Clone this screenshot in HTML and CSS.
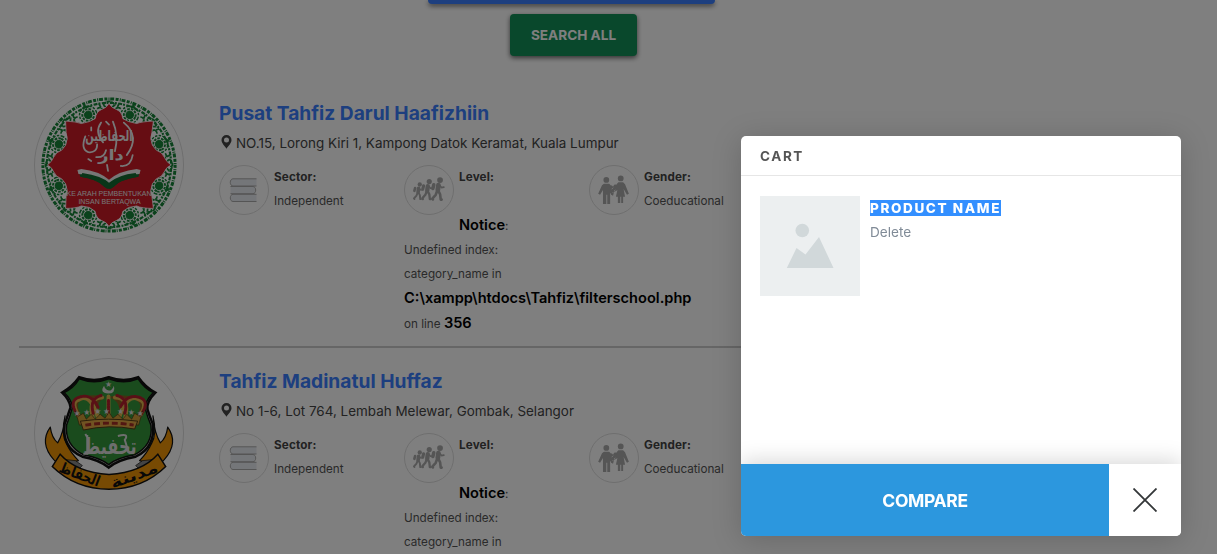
FILE: index.html
```html
<!DOCTYPE html>
<html lang="en">
<head>
<meta charset="utf-8">
<title>Tahfiz schools</title>
<link rel="stylesheet" href="styles.css">
</head>
<body>
<svg class="defs" width="0" height="0" aria-hidden="true">
  <defs>
    <symbol id="pin" viewBox="0 0 11 14"><path fill="#444" fill-rule="evenodd" d="M5.5 0A5 5 0 0 0 .5 5C.5 8.300 3.500 10.500 5.500 13.800 7.500 10.500 10.500 8.300 10.500 5A5 5 0 0 0 5.500 0ZM5.500 2.400a2.500 2.500 0 1 1 0 5 2.500 2.500 0 0 1 0-5Z"/></symbol>
    <symbol id="books" viewBox="0 0 48 48">
      <g fill="#e9ecf3" stroke="#aaa" stroke-width="1"><path d="M36.500 12.800H13c-3.600 0-3.600 7.200 0 7.200H36.500" /><path d="M10.500 20.500h22.500c3.600 0 3.600 7.200 0 7.200H10.500"/><path d="M36.500 28.300H13c-3.600 0-3.600 7.200 0 7.200H36.500"/></g>
    </symbol>
    <g id="walker" fill="none" stroke="#aaa" stroke-linecap="round" stroke-linejoin="round">
      <circle cx="2.500" cy="-10.300" r="3" fill="#aaa" stroke="none"/>
      <path d="M.8-5 .2 0" stroke-width="5"/>
      <path d="M.8 1 2.600 4.500 3.200 10h1M-.5 1-2 5-5.500 9l.6.8" stroke-width="2.700"/>
      <path d="M2-5 4-2.500 6.500-3" stroke-width="1.700"/>
      <path d="M-4-5.500-5-1.500" stroke-width="3.600"/>
    </g>
    <symbol id="level" viewBox="0 0 50 50"><use href="#walker" transform="translate(13.500 27) scale(.75)"/><use href="#walker" transform="translate(23 25.500) scale(.9)"/><use href="#walker" transform="translate(34 25)"/></symbol>
    <symbol id="gender" viewBox="0 0 50 50">
      <g fill="#aaa"><circle cx="17" cy="14.500" r="3"/><path d="M14.500 18.500h5.500l3 3v7h-2V39.500h-3V30h-1v9.500h-3.500V25L10.500 30l-2-1.200 4-8.800Z"/><circle cx="32" cy="13" r="3"/><path d="M29.500 17h5l2 2 4 10-2 1-3.500-6 1.500 8h-2v6.500h-2V32h-1v6.500h-2.500V32H27l1.500-7-2.500 1.500-1-4Z"/><path d="M22 20l2 1 2-2 2 1-1 3 1 2-3 2-1 4-2-1-1-4Z"/></g>
      <path d="m22.500 24 1.500-1m1 3 1.500-1m-3-4 1 1m0 5-1 1" stroke="#f4f4f4" stroke-width=".8"/>
    </symbol>
    <g id="medal" fill="none" stroke="#168438">
      <circle r="3.800" fill="#168438"/><circle r="6" stroke-width="2" stroke-dasharray="2.600 1.170"/><circle r="8.800" stroke-width="1.500" stroke-dasharray="2.500 1.300"/><path d="M0-11 2-8h-4Z" fill="#168438"/>
    </g>
    <g id="arch"><path d="M-10 0Q-8 7 0 8 8 7 10 0M-6 1Q0-6 6 1Q0 7-6 1M-12 5q4-3 6 2M12 5q-4-3-6 2" fill="none" stroke="#168438" stroke-width="1.800" stroke-dasharray="4 .7"/></g>
  </defs>
</svg>

<main class="page">
  <div class="actions">
    <div class="filter-btn"></div>
    <button class="all-btn">SEARCH ALL</button>
  </div>

  <article class="school">
    <svg class="logo" viewBox="0 0 150 150">
      <g transform="translate(75 75)">
        <circle r="67" fill="none" stroke="#168438" stroke-width="3" stroke-dasharray="3 1.200 1 .8 4 1.500"/>
        <circle r="63" fill="none" stroke="#168438" stroke-width="2.200" stroke-dasharray="2 1.400 4 1"/>
        <use href="#arch" transform="translate(0 -62)"/><use href="#arch" transform="rotate(45) translate(0 -62)"/><use href="#arch" transform="rotate(90) translate(0 -62)"/><use href="#arch" transform="rotate(135) translate(0 -62)"/><use href="#arch" transform="rotate(180) translate(0 -62)"/><use href="#arch" transform="rotate(225) translate(0 -62)"/><use href="#arch" transform="rotate(270) translate(0 -62)"/><use href="#arch" transform="rotate(315) translate(0 -62)"/>
        <use href="#medal" transform="rotate(22.500) translate(0 -55)"/><use href="#medal" transform="rotate(67.500) translate(0 -55)"/><use href="#medal" transform="rotate(112.500) translate(0 -55)"/><use href="#medal" transform="rotate(157.500) translate(0 -55)"/><use href="#medal" transform="rotate(202.500) translate(0 -55)"/><use href="#medal" transform="rotate(247.500) translate(0 -55)"/><use href="#medal" transform="rotate(292.500) translate(0 -55)"/><use href="#medal" transform="rotate(337.500) translate(0 -55)"/>
      </g>
      <path fill="#cc1a26" stroke="#fff" stroke-width=".8" d="M75 12.500Q77 17 83 19 88 21 89 28L95 31 103 33Q108 31 120 30.500L118.500 42Q116 48 119 55L123 60Q129 62 131 67 133 72 138 75 133 77 131 82 129 87 123 89L119 94Q116 101 118.500 107L120 119Q108 119 103 116.500L95 118 89 122Q88 129 83 131 77 133 75 137.500 73 133 67 131 62 129 61 122L55 118 47 116.500Q42 119 31 119L31.500 107Q34 101 31 94L27 89Q21 87 19 82 17 77 12.500 75 17 72 19 67 21 62 27 60L31 55Q34 48 31.500 42L31 30.500Q42 31 47 33L55 31 61 28Q62 21 67 19 73 17 75 12.500Z"/>
      <g class="script">
        <text x="75" y="51" font-size="15" text-anchor="middle" textLength="48" lengthAdjust="spacingAndGlyphs">الحفاظين</text>
        <text x="77" y="70" font-size="15" text-anchor="middle" textLength="26" lengthAdjust="spacingAndGlyphs">دار</text>
      </g>
      <g fill="none" stroke="#eee" stroke-width="1.800" stroke-linecap="round"><path d="M67 32Q60 42 69 52M79 31q6 14 2 30M90 32q17 14 3 33M51 46Q46 59 54 62q9 1 9-8M62 67q8 1 10-7M87 76q10 1 12-11M57 37v3M72 31l3 3M54 69l3 2M73 75l1 6"/></g>
      <path d="M44 81Q66 83 75 91 84 83 106 81L105 87Q86 90 79 97L76 99 71 97Q64 90 46 87Z" fill="#126b31"/>
      <path d="M43 80l4-1Q65 81 75 90 85 81 103 79l4 1-1 4Q86 85 77 94l-2 1-3-1Q65 86 44 84Z" fill="#eee"/><path d="M48 83Q68 86 75 93 84 85 102 83l2 4Q86 90 80 97l-3 2h-4l-3-2Q62 89 46 87Z" fill="#126b31"/>
      <g class="motto"><text x="32" y="106" textLength="86" lengthAdjust="spacingAndGlyphs">KE ARAH PEMBENTUKAN</text><text x="44" y="114.300" textLength="63" lengthAdjust="spacingAndGlyphs">INSAN BERTAQWA</text></g>
    </svg>
    <div class="info">
      <h2>Pusat Tahfiz Darul Haafizhiin</h2>
      <p class="address"><svg class="pin"><use href="#pin"/></svg>NO.15, Lorong Kiri 1, Kampong Datok Keramat, Kuala Lumpur</p>
      <div class="facts">
        <div class="fact"><svg class="fact-icon"><use href="#books"/></svg><div><b>Sector:</b><span>Independent</span></div></div>
        <div class="level">
          <div class="fact"><svg class="fact-icon"><use href="#level"/></svg><div><b>Level:</b><span></span><span class="notice"><strong>Notice</strong>:</span></div></div>
          <div class="trace"><p>Undefined index:</p><p>category_name in</p><p><strong>C:\xampp\htdocs\Tahfiz\filterschool.php</strong></p><p>on line <strong>356</strong></p></div>
        </div>
        <div class="fact"><svg class="fact-icon"><use href="#gender"/></svg><div><b>Gender:</b><span>Coeducational</span></div></div>
      </div>
    </div>
  </article>

  <article class="school">
    <svg class="logo" viewBox="0 0 150 150">
      <g fill="#ee9407" stroke="#111" stroke-width="1.200" stroke-linejoin="round">
        <path d="M15.500 69Q17 80 23 85 29 75 30.500 57.500 26 76 32 86 36 95 44 103L25 108 19 102Q4 85 15.500 69Z"/>
        <path d="M134.500 69Q133 80 127 85 121 75 119.500 57.500 124 76 118 86 114 95 106 103L125 108 131 102Q146 85 134.500 69Z"/>
      </g>
      <path d="M31 102l10 1 7 5-5 5-14-7ZM119 102l-10 1-7 5 5 5 14-7Z" fill="#888" stroke="#111" stroke-width=".7"/>
      <path d="M44.700 18.500Q60 24 74.700 18.500 90 24 104.700 18.500 112 29 122 34 113 43 114 51 116 58 119.500 66 122 90 102 99 84 102 74.700 110 65 102 48 99 27 90 30 66 33 58 36 49 35 41 27.500 34 38 28 44.700 18.500Z" fill="#ddd" stroke="#111" stroke-width="2.500"/>
      <path d="M45 20Q60 26 74.700 20 90 26 104.500 20 111 30 120 34 111 43 112 51 114 59 117.500 67 120 87 101 97 83 100 74.700 107 66 100 49 97 30 87 32 67 35 59 38 49 37 41 29.500 34 39 30 45 20Z" fill="#35973a" stroke="#111" stroke-width="1.500"/>
      <path d="M47 62Q35 44 45 40 57 34 73 39 89 34 103 40 116 44 103 62Z" fill="#8c6121"/>
      <path d="M49 61Q39 45 47 42 56 38 64 61 60 42 73 38 89 42 85 61 93 38 103 42 111 46 101 61Z" fill="#35973a"/>
      <g fill="none" stroke-linecap="round">
        <path d="M47 62Q34 43 45 41 56 34 64 60M59 61Q53 39 68 39M91 61Q97 39 81 39M103 62Q117 44 105 41 94 34 85 60M74.500 38V60" stroke="#deb44d" stroke-width="4"/>
        <path d="M45 60Q33 43 44 39 57 34 64 49M59 55Q55 40 67 37M91 55Q95 40 83 37M105 60Q118 43 106 39 94 35 87 48M74.500 42V57" stroke="#b4202d" stroke-width="3" stroke-dasharray="2 1"/>
      </g>
      <path d="m41 53 3 5 5-3 3 6 5-5 4 5 5-5 5 4 4-6 4 6 5-4 5 5 4-5 5 5 3-6 5 3 3-5-4 14Q75 61 45 67Z" fill="#cf9d38" stroke="#523a15" stroke-width=".7"/>
      <path d="M46 63Q74 59 104 63L101 71Q75 66 49 72Z" fill="#e0a744" stroke="#523a15" stroke-width="1"/>
      <path d="M51 67Q75 63 100 67" stroke="#a42d25" stroke-width="3" stroke-dasharray="6 3" fill="none"/>
      <g class="stars"><text x="39" y="58">★</text><text x="49" y="57">★</text><text x="60" y="56">★</text><text x="69" y="56" font-size="12">★</text><text x="83" y="56">★</text><text x="94" y="57">★</text><text x="103" y="58">★</text><text x="71" y="28">★</text></g>
      <path d="M70 27q-5 7 4 8 8 0 6-8-2 5-5 5-4-1-5-5Z" fill="#ddd"/>
      <g class="tahfiz"><text x="76" y="96" text-anchor="middle" textLength="54" lengthAdjust="spacingAndGlyphs">تحفيظ</text></g>
      <path d="M53 77v19H49M51 76l3 5M84 78q12-3 7 4l4 13" fill="none" stroke="#ddd" stroke-width="2"/>
      <path d="M25.500 96.500Q42 115 75 117 108 115 124.500 96.500L132.500 109Q109 132 75 132 41 132 17.500 109Z" fill="#ee9407" stroke="#111" stroke-width="1.500"/>
      <g class="ribbon-text"><text x="45" y="122" transform="rotate(21 45 118)" text-anchor="middle" textLength="43" lengthAdjust="spacingAndGlyphs">الحفاظ</text><text x="101" y="123" transform="rotate(-20 101 119)" text-anchor="middle" textLength="50" lengthAdjust="spacingAndGlyphs">مدينة</text></g>
    </svg>
    <div class="info">
      <h2>Tahfiz Madinatul Huffaz</h2>
      <p class="address"><svg class="pin"><use href="#pin"/></svg>No 1-6, Lot 764, Lembah Melewar, Gombak, Selangor</p>
      <div class="facts">
        <div class="fact"><svg class="fact-icon"><use href="#books"/></svg><div><b>Sector:</b><span>Independent</span></div></div>
        <div class="level">
          <div class="fact"><svg class="fact-icon"><use href="#level"/></svg><div><b>Level:</b><span></span><span class="notice"><strong>Notice</strong>:</span></div></div>
          <div class="trace"><p>Undefined index:</p><p>category_name in</p></div>
        </div>
        <div class="fact"><svg class="fact-icon"><use href="#gender"/></svg><div><b>Gender:</b><span>Coeducational</span></div></div>
      </div>
    </div>
  </article>
</main>

<div class="backdrop"></div>

<section class="cart">
  <header>CART</header>
  <div class="cart-body">
    <svg class="thumb" viewBox="0 0 100 100"><path fill="#eceff0" d="M0 0h100v100H0z"/><g fill="#d1d8da"><circle cx="42.300" cy="34.500" r="6.800"/><path d="M26.800 72 36.500 52 45.500 58.500 59 41 73.500 72Z"/></g></svg>
    <div class="product"><h3><mark>PRODUCT NAME</mark></h3><a>Delete</a></div>
  </div>
  <footer><button class="compare">COMPARE</button><button class="close" aria-label="Close"><svg viewBox="0 0 24 24"><path d="M.5.500l23 23M23.500.500l-23 23"/></svg></button></footer>
</section>
</body>
</html>
```
FILE: styles.css
```css
* { box-sizing: border-box; }
html, body { height: 100%; overflow: hidden; }
body { margin: 0; background: #fff; color: #555; font-family: Inter, "Liberation Sans", sans-serif; font-size: 11.700px; line-height: 24px; }
h2, h3, p { margin: 0; }
button { border: 0; padding: 0; font-family: inherit; }
.defs { position: absolute; }
.page { padding-left: 19px; width: 1128px; height: 554px; overflow: hidden; }
.actions { display: flex; flex-direction: column; align-items: center; gap: 10px; height: 79px; }
.filter-btn { width: 287px; height: 4px; margin-right: 4px; background: #3b7eff; border-radius: 0 0 4px 4px; box-shadow: 0 2px 5px rgba(0,0,0,.6); }
.all-btn { width: 127px; height: 42px; padding-bottom: 1px; background: #129058; color: #fff; border-radius: 4px; font-size: 13.600px; font-weight: 700; box-shadow: 0 2px 5px rgba(0,0,0,.6); }
.school { display: flex; align-items: flex-start; gap: 35px; height: 269px; padding: 11px 0 0 15px; border-bottom: 2px solid #ccc; }
.school + .school { height: 206px; padding-top: 10px; border: 0; }
.logo { flex: none; width: 150px; height: 150px; border: 1px solid #ddd; border-radius: 50%; overflow: hidden; }
.script text { fill: #eee; font-family: "DejaVu Sans", sans-serif; font-weight: bold; }
.motto text { fill: #eee; font: 7px "Liberation Sans", sans-serif; }
.stars text { fill: #ddd; font: 8px "DejaVu Sans", sans-serif; }
.tahfiz text { fill: #ddd; font: bold 23px "DejaVu Sans", sans-serif; }
.ribbon-text text { fill: #111; font: bold 15px "DejaVu Sans", sans-serif; }
.info { padding-top: 10px; }
h2 { color: #3b7eff; font-size: 19.200px; font-weight: 650; line-height: 26px; }
.address { display: flex; align-items: center; height: 34px; color: #444; font-size: 13.450px; white-space: nowrap; }
.pin { width: 11px; height: 14px; margin: -2px 4px 0 2px; }
.facts { display: grid; grid-template-columns: repeat(3, 185px); padding-top: 5px; }
.fact { display: flex; align-items: flex-start; gap: 5px; }
.fact-icon { flex: none; width: 50px; height: 50px; border: 1px solid #ddd; border-radius: 50%; }
.fact b, .fact span { display: block; height: 24px; }
.fact b { color: #444; font-weight: 700; letter-spacing: .15px; }
strong { color: #000; font-size: 14.600px; font-weight: 600; }
.trace { padding-top: 1px; white-space: nowrap; }
.trace p { height: 24px; }
.trace p:last-child { padding-top: 1px; }
.school + .school .trace p:last-child { padding-top: 0; }
.backdrop { position: fixed; inset: 0; background: rgba(0,0,0,.5); }
.cart { position: fixed; right: 36px; bottom: 18px; display: flex; flex-direction: column; width: 440px; height: 400px; background: #fff; border-radius: 5px; overflow: hidden; box-shadow: 0 4px 30px rgba(0,0,0,.18); }
.cart header { height: 40px; padding-left: 19px; border-bottom: 1px solid #e6e6e6; color: #555; font-size: 13.500px; font-weight: 700; letter-spacing: 1.600px; line-height: 40px; }
.cart-body { display: flex; flex: 1; gap: 10px; padding: 20px 19px; }
.thumb { width: 100px; height: 100px; }
.product h3 { height: 24px; font-size: 13.500px; font-weight: 800; letter-spacing: 1.620px; line-height: 24px; }
.product mark { display: inline-block; height: 16px; background: #338fff; color: #fff; line-height: 17px; }
.product a { color: #808b97; font-size: 13.600px; line-height: 24px; }
.cart footer { display: flex; height: 72px; box-shadow: 0 -4px 20px rgba(0,0,0,.15); }
.compare { flex: 1; background: #2c97de; color: #fff; font-size: 17.500px; font-weight: 700; letter-spacing: -.35px; }
.close { display: flex; align-items: center; justify-content: center; width: 72px; background: #fff; }
.close svg { width: 24px; height: 24px; fill: none; stroke: #333638; stroke-width: 1.800; }
```
